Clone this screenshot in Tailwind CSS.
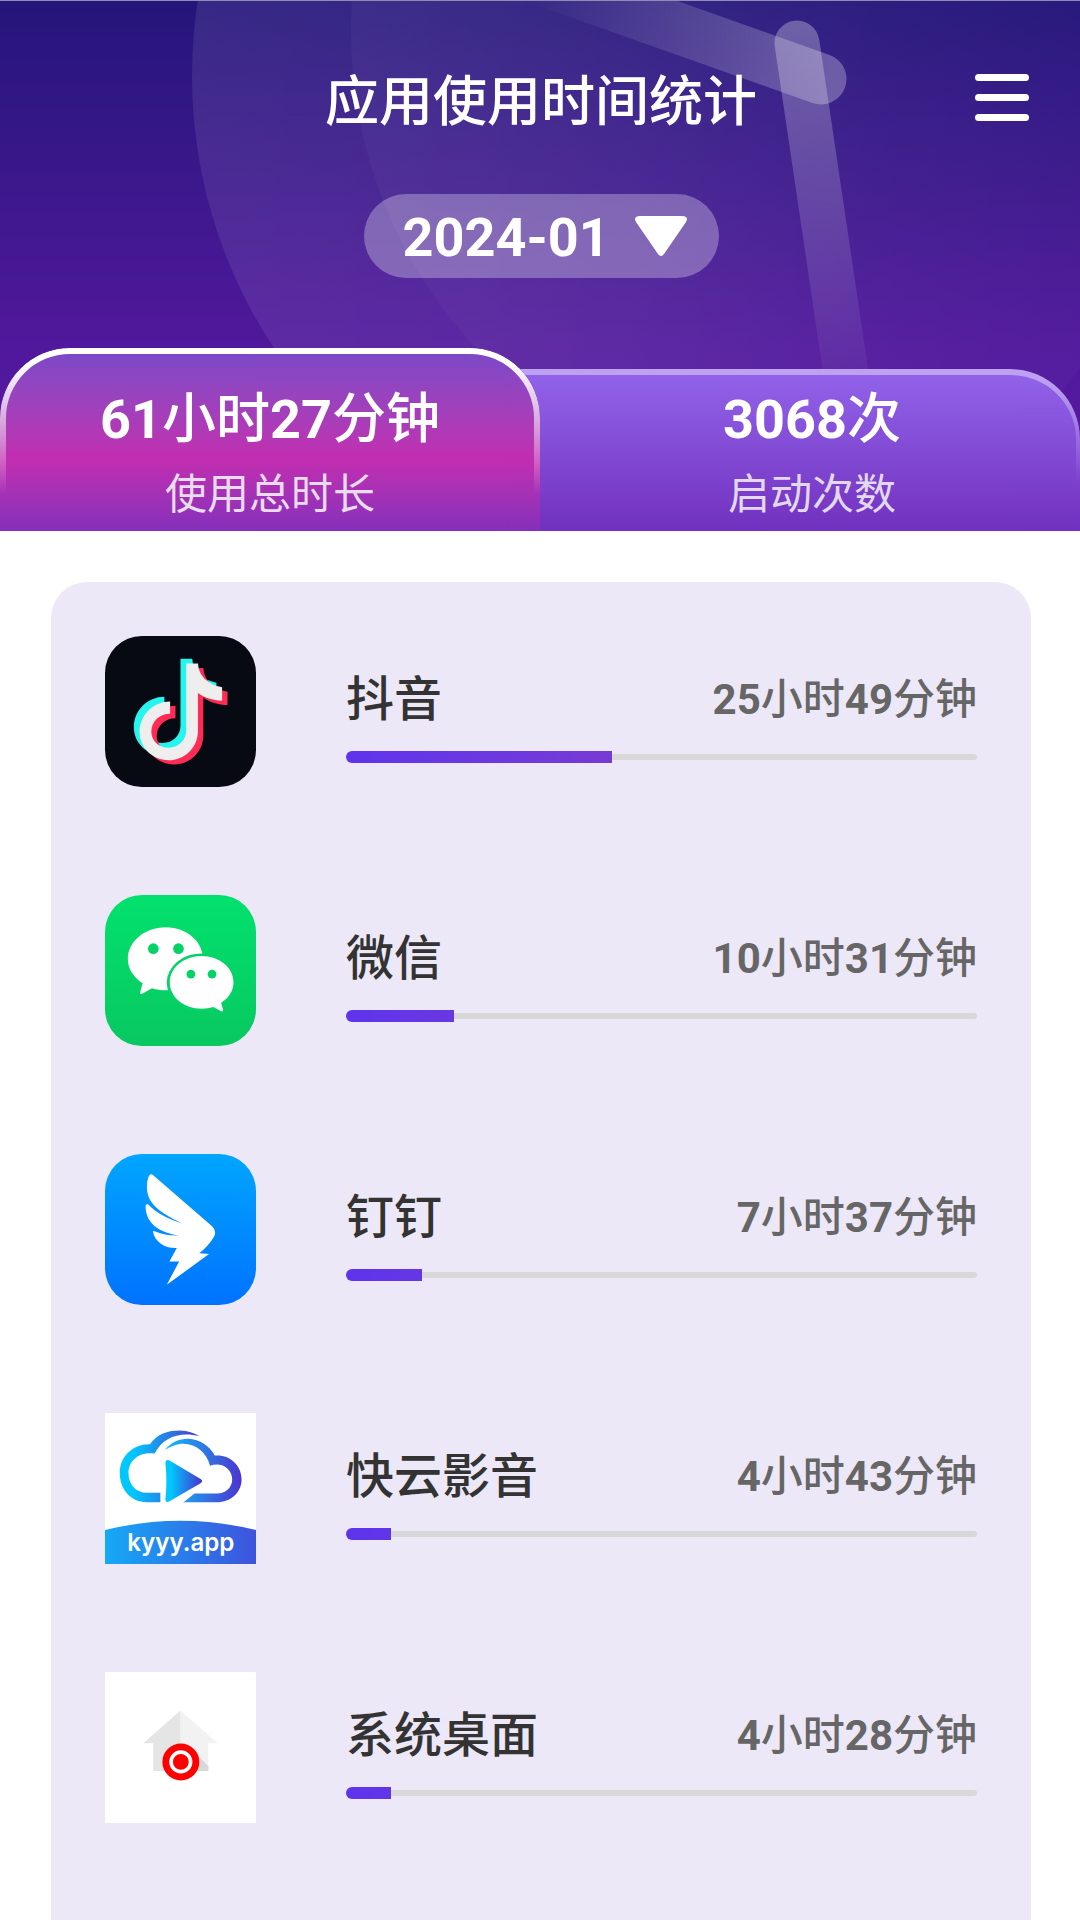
<!DOCTYPE html>
<html lang="zh-CN">
<head>
<meta charset="utf-8">
<meta name="viewport" content="width=device-width, initial-scale=1">
<title>应用使用时间统计</title>
<script src="https://cdn.jsdelivr.net/npm/@tailwindcss/browser@4"></script>
</head>
<body class="flex min-h-screen flex-col bg-white font-['Roboto','Noto_Sans_CJK_SC',sans-serif] text-[#333333]">

<header class="relative isolate overflow-hidden border-t border-[#8f8bb5] bg-linear-to-b from-[#24157a] via-[#50189c] via-65% to-[#5a1aa5]">
  <!-- clock face and hands behind the header -->
  <svg class="absolute inset-0 -z-10 size-full" viewBox="0 0 1080 530" preserveAspectRatio="xMidYMin slice" aria-hidden="true">
    <defs>
      <linearGradient id="face" x1="190" y1="0" x2="1080" y2="0" gradientUnits="userSpaceOnUse">
        <stop offset="0" stop-color="#fff" stop-opacity=".085"/><stop offset=".5" stop-color="#fff" stop-opacity=".06"/><stop offset="1" stop-color="#fff" stop-opacity=".02"/>
      </linearGradient>
      <linearGradient id="inner" x1="351" y1="0" x2="900" y2="0" gradientUnits="userSpaceOnUse">
        <stop offset="0" stop-color="#fff" stop-opacity=".035"/><stop offset="1" stop-color="#fff" stop-opacity="0"/>
      </linearGradient>
      <linearGradient id="hour" x1="530" y1="0" x2="830" y2="0" gradientUnits="userSpaceOnUse">
        <stop offset="0" stop-color="#fff" stop-opacity="0"/><stop offset="1" stop-color="#fff" stop-opacity=".27"/>
      </linearGradient>
      <linearGradient id="minute" x1="0" y1="20" x2="0" y2="400" gradientUnits="userSpaceOnUse">
        <stop offset="0" stop-color="#fff" stop-opacity=".29"/><stop offset="1" stop-color="#fff" stop-opacity=".02"/>
      </linearGradient>
    </defs>
    <circle cx="684" cy="75" r="492" fill="url(#face)"/>
    <circle cx="816" cy="30" r="465" fill="url(#inner)"/>
    <path d="M821 78 L480 -43" stroke="url(#hour)" stroke-width="51" stroke-linecap="round"/>
    <path d="M797 42 L853 420" stroke="url(#minute)" stroke-width="45" stroke-linecap="round"/>
  </svg>

  <div class="relative flex justify-center pt-[66px] pl-0.5">
    <h1 class="text-[54px] leading-[72px] font-medium text-white">应用使用时间统计</h1>
    <button type="button" aria-label="菜单" class="absolute top-16 right-[43px] flex h-16 w-[70px] flex-col items-center justify-center gap-[13px]">
      <span class="h-[7px] w-[54px] rounded-full bg-white"></span>
      <span class="h-[7px] w-[54px] rounded-full bg-white"></span>
      <span class="h-[7px] w-[54px] rounded-full bg-white"></span>
    </button>
  </div>

  <div class="mt-[55px] flex justify-center pl-0.5">
    <label class="relative block">
      <select aria-label="月份" class="block h-[84px] w-[355px] appearance-none rounded-full bg-white/29 pt-1 pl-[39px] text-[54px] leading-[80px] font-bold text-white">
        <option>2024-01</option>
      </select>
      <svg class="pointer-events-none absolute top-[22px] right-8 h-10 w-[52px]" viewBox="0 0 52 40" fill="#fff" aria-hidden="true">
        <path d="M4 0H48Q54 1 51 6L29 38Q26 42 23 38L1 6Q-2 1 4 0Z"/>
      </svg>
    </label>
  </div>

  <div role="tablist" class="mt-[70px] grid grid-cols-2 items-end">
    <button type="button" role="tab" aria-selected="true" class="relative z-10 flex h-[183px] flex-col items-center justify-end gap-[17px] rounded-t-[70px] bg-linear-to-b from-[#7849c8] via-[#c22db0] via-61% to-[#852fbb] pb-2.5">
      <span class="absolute inset-0 rounded-t-[70px] border-6 border-b-0 border-white [mask-image:linear-gradient(to_bottom,black_8%,transparent_80%)]"></span>
      <span class="text-[54px] leading-[64px] font-medium text-white"><b>61</b>小时<b>27</b>分钟</span>
      <span class="text-[42px] leading-[52px] text-[#e8dcee]">使用总时长</span>
    </button>
    <button type="button" role="tab" aria-selected="false" class="relative flex h-[162px] flex-col items-center justify-end gap-[17px] pb-2.5 pl-1">
      <span class="absolute inset-y-0 right-0 -left-20 -z-10 rounded-tr-[70px] bg-linear-to-b from-[#9364eb] to-[#7230bf]"></span>
      <span class="absolute inset-y-0 right-0 -left-20 rounded-tr-[70px] border-t-6 border-r-4 border-white/40 [mask-image:linear-gradient(to_bottom,black_8%,transparent_70%)]"></span>
      <span class="text-[54px] leading-[64px] font-medium text-white"><b>3068</b>次</span>
      <span class="text-[42px] leading-[52px] text-[#e2d9f0]">启动次数</span>
    </button>
  </div>
</header>

<main class="flex flex-1 flex-col pt-[51px]">
  <ul class="mr-[49px] ml-[51px] flex flex-1 flex-col gap-[108px] rounded-t-[36px] bg-[#ede8f7] pt-[54px] pr-[54px] pb-[98px] pl-[54px]">

    <li class="flex gap-[90px]">
      <svg class="size-[151px] shrink-0" viewBox="46 48 450 450" role="img" aria-label="抖音">
        <defs><path id="note" d="M288 130H323C325 166 352 193 395 201V241C367 240 343 232 323 218V330C323 382 282 418 236 418C187 418 149 380 149 334C149 284 189 243 240 243V280C209 280 184 303 184 333C184 360 207 381 235 381C265 381 288 359 288 329Z"/></defs>
        <rect x="46" y="48" width="450" height="450" rx="110" fill="#080a13"/>
        <use href="#note" x="-17" y="-14" fill="#26f4ee"/>
        <use href="#note" x="16" y="13" fill="#fe2c55"/>
        <use href="#note" fill="#eeeeee"/>
      </svg>
      <div class="min-w-0 flex-1 pt-8">
        <div class="flex items-center justify-between leading-[64px]">
          <h2 class="text-[48px] font-medium">抖音</h2>
          <p class="text-[42px] font-medium text-[#666666]"><b>25</b>小时<b>49</b>分钟</p>
        </div>
        <div role="progressbar" aria-label="抖音" aria-valuenow="42" class="mt-[19px] flex h-3 items-center">
          <div class="h-3 shrink-0 rounded-l-full bg-linear-to-r from-[#5e34ec] to-[#783ad5]" style="width:42.1%"></div>
          <div class="h-1.5 flex-1 rounded-r-full bg-[#d8d8d8]"></div>
        </div>
      </div>
    </li>

    <li class="flex gap-[90px]">
      <svg class="size-[151px] shrink-0" viewBox="46 45 450 450" role="img" aria-label="微信">
        <defs><linearGradient id="wx" x1="0" y1="0" x2="0" y2="1"><stop offset="0" stop-color="#02e16e"/><stop offset="1" stop-color="#08c860"/></linearGradient></defs>
        <rect x="46" y="45" width="450" height="450" rx="110" fill="url(#wx)"/>
        <path fill="#fff" d="M227 141C290 141 338 184 338 236C338 288 290 329 227 329C213 329 199 327 186 323L157 339Q149 342 151 334L158 308C131 291 114 265 114 236C114 184 164 141 227 141Z"/>
        <ellipse cx="334" cy="306" rx="104" ry="87" fill="#05d367"/>
        <path fill="#fff" d="M334 227C387 227 429 262 429 305C429 330 415 352 392 366L398 387Q399 394 391 391L369 379Q353 384 334 384C281 384 239 349 239 305C239 262 281 227 334 227Z"/>
        <g fill="#05d367"><circle cx="190" cy="205" r="16"/><circle cx="265" cy="205" r="16"/><circle cx="302" cy="281" r="13"/><circle cx="365" cy="281" r="13"/></g>
      </svg>
      <div class="min-w-0 flex-1 pt-8">
        <div class="flex items-center justify-between leading-[64px]">
          <h2 class="text-[48px] font-medium">微信</h2>
          <p class="text-[42px] font-medium text-[#666666]"><b>10</b>小时<b>31</b>分钟</p>
        </div>
        <div role="progressbar" aria-label="微信" aria-valuenow="17" class="mt-[19px] flex h-3 items-center">
          <div class="h-3 shrink-0 rounded-l-full bg-linear-to-r from-[#5e34ec] to-[#6838e2]" style="width:17.1%"></div>
          <div class="h-1.5 flex-1 rounded-r-full bg-[#d8d8d8]"></div>
        </div>
      </div>
    </li>

    <li class="flex gap-[90px]">
      <svg class="size-[151px] shrink-0" viewBox="46 42 450 450" role="img" aria-label="钉钉">
        <defs><linearGradient id="dd" x1="0" y1="0" x2="0" y2="1"><stop offset="0" stop-color="#00a6ff"/><stop offset="1" stop-color="#0072ff"/></linearGradient></defs>
        <rect x="46" y="42" width="450" height="450" rx="110" fill="url(#dd)"/>
        <path fill="#fff" d="M188 104L366 258Q380 272 370 290Q354 316 327 338L356 340L230 432L267 362H238L260 322C226 324 193 304 189 272Q190 270 196 273C216 282 240 286 266 285C210 277 166 250 167 196Q168 191 174 192C200 220 240 238 278 250C222 222 171 196 171 142Q171 120 177 107Q182 100 188 104Z"/>
      </svg>
      <div class="min-w-0 flex-1 pt-8">
        <div class="flex items-center justify-between leading-[64px]">
          <h2 class="text-[48px] font-medium">钉钉</h2>
          <p class="text-[42px] font-medium text-[#666666]"><b>7</b>小时<b>37</b>分钟</p>
        </div>
        <div role="progressbar" aria-label="钉钉" aria-valuenow="12" class="mt-[19px] flex h-3 items-center">
          <div class="h-3 shrink-0 rounded-l-full bg-linear-to-r from-[#5e34ec] to-[#6537e4]" style="width:12.1%"></div>
          <div class="h-1.5 flex-1 rounded-r-full bg-[#d8d8d8]"></div>
        </div>
      </div>
    </li>

    <li class="flex gap-[90px]">
      <svg class="size-[151px] shrink-0" viewBox="46 38 450 450" role="img" aria-label="快云影音">
        <defs>
          <linearGradient id="kyL" x1="90" y1="0" x2="330" y2="0" gradientUnits="userSpaceOnUse"><stop offset=".15" stop-color="#00c8ff"/><stop offset="1" stop-color="#4f38cc"/></linearGradient>
          <linearGradient id="kyR" x1="225" y1="0" x2="453" y2="0" gradientUnits="userSpaceOnUse"><stop offset="0" stop-color="#10bdf8"/><stop offset="1" stop-color="#4c35d0"/></linearGradient>
          <linearGradient id="kyP" x1="225" y1="0" x2="336" y2="0" gradientUnits="userSpaceOnUse"><stop offset=".15" stop-color="#00c8ff"/><stop offset="1" stop-color="#4a30cc"/></linearGradient>
          <linearGradient id="kyB" x1="0" y1="0" x2="1" y2="0"><stop offset="0" stop-color="#15a9f6"/><stop offset="1" stop-color="#3e53de"/></linearGradient>
        </defs>
        <rect x="46" y="38" width="450" height="450" fill="#fff"/>
        <path fill="url(#kyL)" d="M211 304H170C124 304 90 266 90 217C90 167 129 130 180 131C203 98 235 90 270 90Q304 92 328 107C270 93 220 108 194 159C150 151 116 178 116 217C116 252 139 276 170 276H211Z"/>
        <path fill="url(#kyR)" d="M225 148C242 126 266 115 294 115C329 116 358 137 373 165C418 161 453 194 453 236C453 275 420 304 380 304H280L313 278H380C405 278 425 260 425 236C425 204 394 183 359 195C348 151 309 126 272 130Q246 134 225 148Z"/>
        <path fill="url(#kyP)" d="M237 179L331 235Q340 241 331 247L237 302Q226 306 226 294Q232 240 226 188Q227 175 237 179Z"/>
        <path fill="url(#kyB)" d="M46 387Q271 331 496 387V488H46Z"/>
        <text x="272" y="448" text-anchor="middle" font-size="72" class="fill-white font-['Inter',sans-serif] font-semibold">kyyy.app</text>
      </svg>
      <div class="min-w-0 flex-1 pt-8">
        <div class="flex items-center justify-between leading-[64px]">
          <h2 class="text-[48px] font-medium">快云影音</h2>
          <p class="text-[42px] font-medium text-[#666666]"><b>4</b>小时<b>43</b>分钟</p>
        </div>
        <div role="progressbar" aria-label="快云影音" aria-valuenow="7" class="mt-[19px] flex h-3 items-center">
          <div class="h-3 shrink-0 rounded-l-full bg-linear-to-r from-[#5e34ec] to-[#6236e7]" style="width:7.1%"></div>
          <div class="h-1.5 flex-1 rounded-r-full bg-[#d8d8d8]"></div>
        </div>
      </div>
    </li>

    <li class="flex gap-[90px]">
      <svg class="size-[151px] shrink-0" viewBox="46 34 450 450" role="img" aria-label="系统桌面">
        <rect x="46" y="34" width="450" height="450" fill="#fff"/>
        <path fill="#f2f2f2" d="M271 149L382 246H354V329H271Z"/>
        <path fill="#e5e5e5" d="M271 149L160 246H190V329H271Z"/>
        <path fill="#d8d8d8" d="M320 279L354 315V329H300Z"/>
        <circle cx="272" cy="302" r="55" fill="#f00"/>
        <circle cx="272" cy="302" r="29" fill="none" stroke="#fff" stroke-width="11"/>
      </svg>
      <div class="min-w-0 flex-1 pt-8">
        <div class="flex items-center justify-between leading-[64px]">
          <h2 class="text-[48px] font-medium">系统桌面</h2>
          <p class="text-[42px] font-medium text-[#666666]"><b>4</b>小时<b>28</b>分钟</p>
        </div>
        <div role="progressbar" aria-label="系统桌面" aria-valuenow="7" class="mt-[19px] flex h-3 items-center">
          <div class="h-3 shrink-0 rounded-l-full bg-linear-to-r from-[#5e34ec] to-[#6236e7]" style="width:7.1%"></div>
          <div class="h-1.5 flex-1 rounded-r-full bg-[#d8d8d8]"></div>
        </div>
      </div>
    </li>
  </ul>
</main>
</body>
</html>
